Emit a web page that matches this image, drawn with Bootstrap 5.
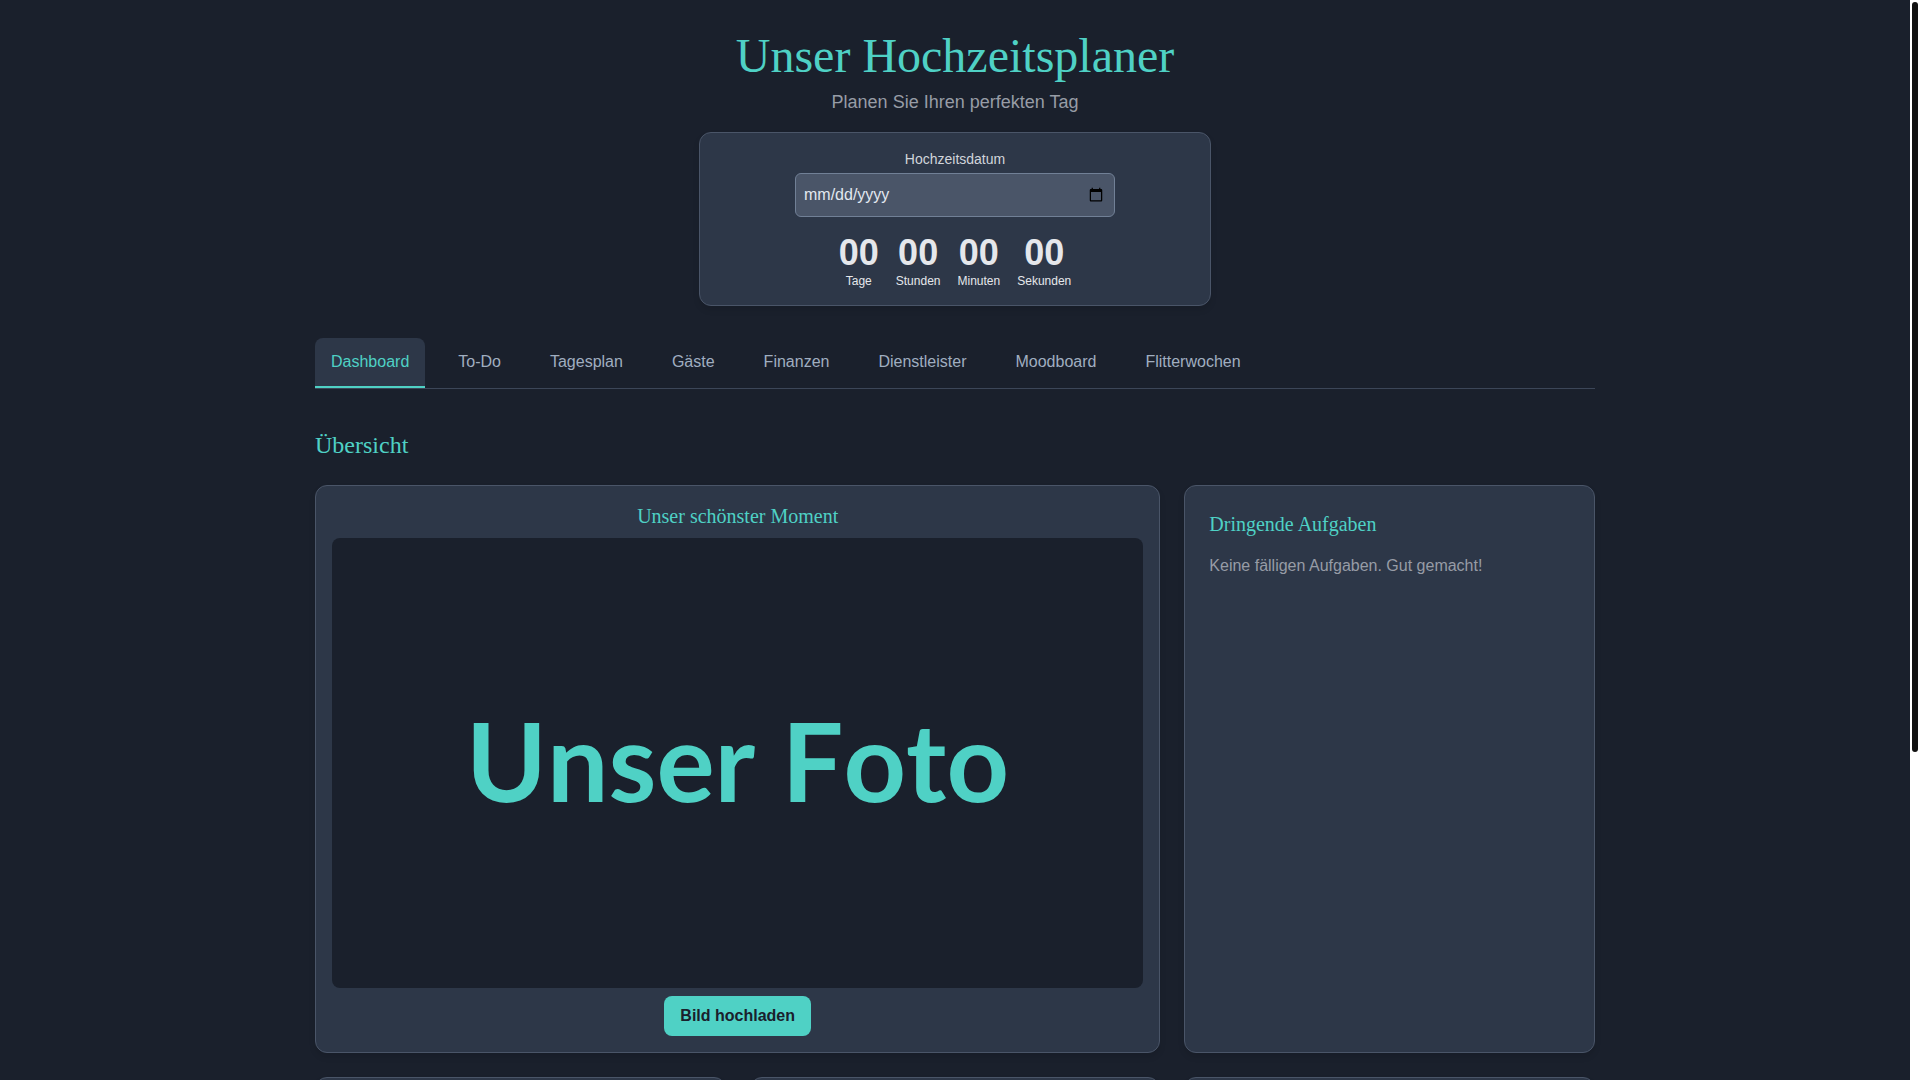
<!DOCTYPE html>
<html lang="de">
<head>
<meta charset="utf-8">
<meta name="viewport" content="width=device-width, initial-scale=1">
<title>Unser Hochzeitsplaner</title>
<link href="https://cdn.jsdelivr.net/npm/bootstrap@5.3.0/dist/css/bootstrap.min.css" rel="stylesheet">
<style>
  :root {
    --ink: #1a202c;
    --panel: #2d3748;
    --edge: #4a5568;
    --accent: #4fd1c5;
    --muted: #979ca6;
  }
  html { scrollbar-width: none; }
  body {
    padding-right: 10px;
    background: var(--ink);
    color: #e5e7eb;
    font-family: "Liberation Sans", Arial, sans-serif;
    font-size: 16px;
    line-height: 24px;
  }
  .scroll-track {
    width: 10px;
    padding: 2px;
    background: #fff;
  }
  .scroll-thumb {
    width: 6px;
    height: 69.7%;
    border-radius: 3px;
    background: #111;
  }
  .page-wrap { max-width: 1280px; }
  h1, h2, h3 {
    font-family: "Liberation Serif", "Times New Roman", serif;
    font-weight: 400;
    color: var(--accent);
  }
  h1 { font-size: 48px; line-height: 48px; }
  h2 { font-size: 24px; line-height: 32px; }
  h3 { font-size: 20px; line-height: 28px; }
  .subtitle { font-size: 18px; line-height: 28px; color: var(--muted); }
  .soft { color: var(--muted); }
  .panel {
    background: var(--panel);
    border: 1px solid var(--edge);
    border-radius: 12px;
    box-shadow: 0 4px 6px rgba(0, 0, 0, .1);
  }
  .countdown { max-width: 512px; }
  .countdown label { font-size: 14px; line-height: 20px; color: #d1d5db; }
  .date-field {
    max-width: 320px;
    height: 44px;
    padding: 8px;
    border: 1px solid #718096;
    border-radius: 6px;
    background: var(--edge);
    color: #e2e8f0;
  }
  .date-field:focus { background: var(--edge); color: #e2e8f0; }
  .count-row, .planner-tabs { gap: 17px; }
  .count-value { font-size: 36px; line-height: 40px; font-weight: 700; }
  .count-unit { font-size: 12px; line-height: 16px; }
  .planner-tabs { border-bottom: 1px solid #3c4658; }
  .planner-tabs .nav-link {
    padding: 12px 16px;
    border: 0;
    border-bottom: 2px solid transparent;
    border-radius: 8px 8px 0 0;
    color: #a0aec0;
  }
  .planner-tabs .nav-link:hover { color: var(--accent); }
  .planner-tabs .nav-link.active {
    background: var(--panel);
    border-bottom-color: var(--accent);
    color: var(--accent);
  }
  .overview { padding-top: 40px; }
  .photo {
    height: 450px;
    padding-bottom: 8px;
    border-radius: 8px;
    background: var(--ink);
    color: var(--accent);
    font-family: Lato, sans-serif;
    font-size: 109px;
    font-weight: 700;
    font-kerning: none;
    line-height: 1;
  }
  .btn-accent {
    --bs-btn-color: var(--ink);
    --bs-btn-bg: var(--accent);
    --bs-btn-hover-bg: #38b2ac;
    --bs-btn-active-bg: #38b2ac;
    padding: 8px 16px;
    border: 0;
    border-radius: 8px;
    font-size: 16px;
    line-height: 24px;
    font-weight: 700;
  }
  .tall { min-height: 438px; }
</style>
</head>
<body>
<div class="page-wrap container-fluid px-0 py-4">
  <header class="text-center pt-2">
    <h1 class="mb-2">Unser Hochzeitsplaner</h1>
    <p class="subtitle mb-3">Planen Sie Ihren perfekten Tag</p>
    <div class="panel countdown mx-auto p-3">
      <label class="d-block mb-1" for="wedding-date">Hochzeitsdatum</label>
      <input class="form-control date-field mx-auto" type="date" id="wedding-date">
      <div class="count-row d-flex justify-content-center mt-3">
        <div><div class="count-value">00</div><div class="count-unit">Tage</div></div>
        <div><div class="count-value">00</div><div class="count-unit">Stunden</div></div>
        <div><div class="count-value">00</div><div class="count-unit">Minuten</div></div>
        <div><div class="count-value">00</div><div class="count-unit">Sekunden</div></div>
      </div>
    </div>
  </header>

  <nav class="nav planner-tabs mt-4 pt-2">
    <a class="nav-link active" aria-current="page" href="#dashboard">Dashboard</a>
    <a class="nav-link" href="#todo">To-Do</a>
    <a class="nav-link" href="#tagesplan">Tagesplan</a>
    <a class="nav-link" href="#gaeste">Gäste</a>
    <a class="nav-link" href="#finanzen">Finanzen</a>
    <a class="nav-link" href="#dienstleister">Dienstleister</a>
    <a class="nav-link" href="#moodboard">Moodboard</a>
    <a class="nav-link" href="#flitterwochen">Flitterwochen</a>
  </nav>

  <main class="overview" id="dashboard">
    <h2 class="mb-4">Übersicht</h2>
    <div class="row g-4">
      <div class="col-lg-8">
        <section class="panel h-100 p-3 text-center">
          <h3 class="mb-2">Unser schönster Moment</h3>
          <div class="photo d-flex align-items-center justify-content-center mb-2">Unser Foto</div>
          <button class="btn btn-accent d-block mx-auto" type="button">Bild hochladen</button>
        </section>
      </div>
      <div class="col-lg-4">
        <section class="panel h-100 p-4">
          <h3 class="mb-3">Dringende Aufgaben</h3>
          <p class="soft mb-0">Keine fälligen Aufgaben. Gut gemacht!</p>
        </section>
      </div>
      <div class="col-lg-4"><section class="panel tall p-4"></section></div>
      <div class="col-lg-4"><section class="panel tall p-4"></section></div>
      <div class="col-lg-4"><section class="panel tall p-4"></section></div>
    </div>
  </main>
</div>
<div class="scroll-track position-fixed top-0 end-0 h-100" aria-hidden="true"><div class="scroll-thumb"></div></div>
<script src="https://cdn.jsdelivr.net/npm/bootstrap@5.3.0/dist/js/bootstrap.bundle.min.js"></script>
</body>
</html>
